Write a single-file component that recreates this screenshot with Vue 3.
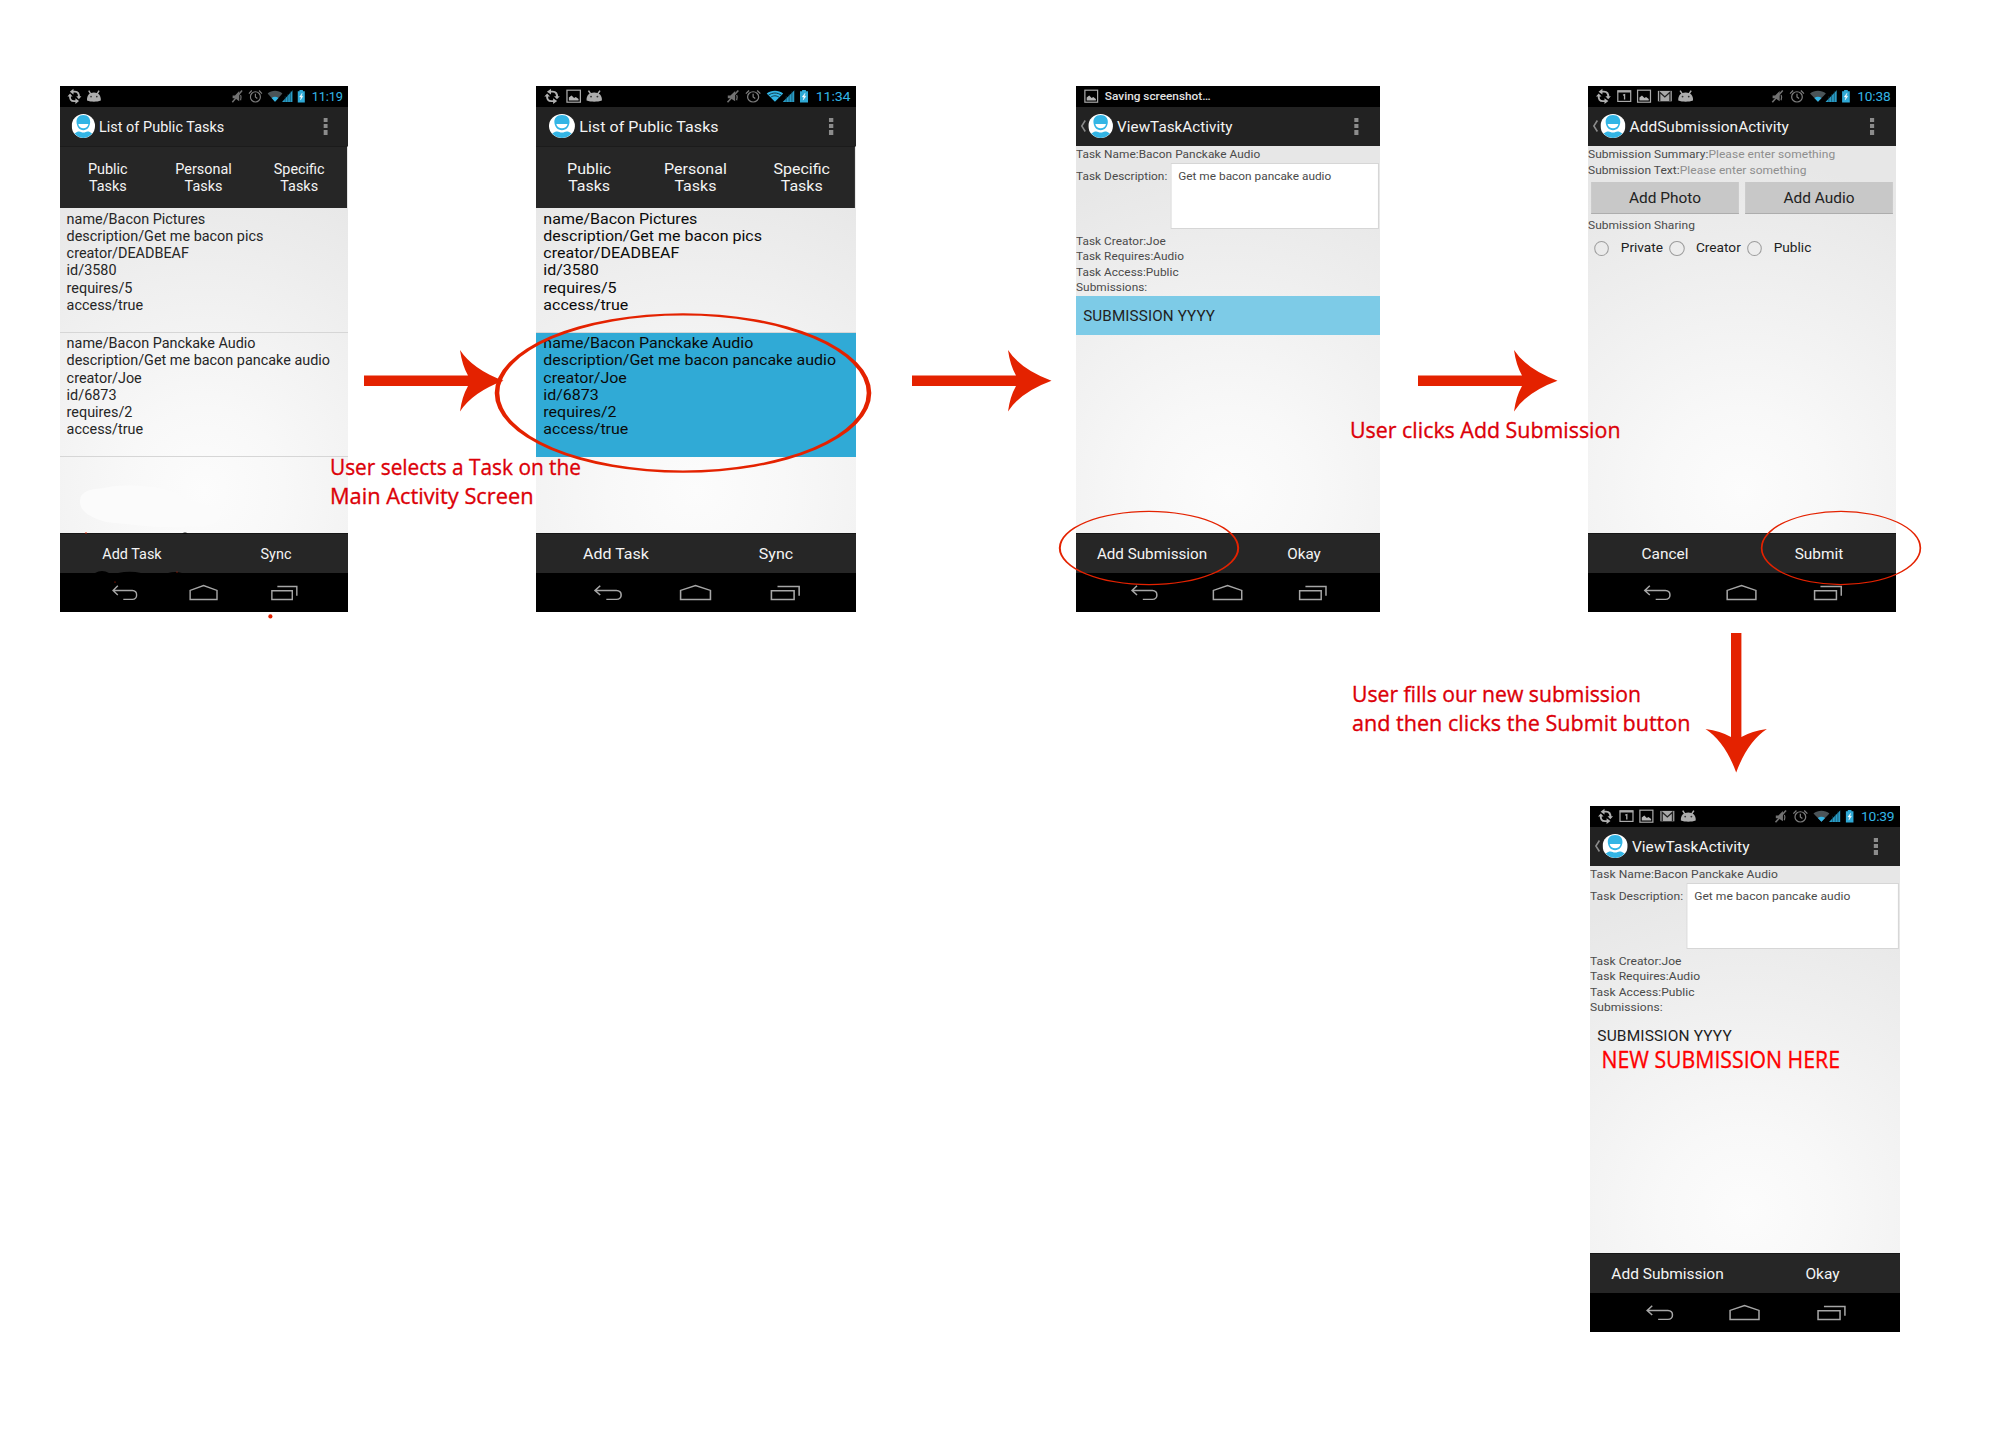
<script setup>
const BASE_WIDTH = 296
const bacon = ['name/Bacon Pictures', 'description/Get me bacon pics', 'creator/DEADBEAF', 'id/3580', 'requires/5', 'access/true']
const pancake = ['name/Bacon Panckake Audio', 'description/Get me bacon pancake audio', 'creator/Joe', 'id/6873', 'requires/2', 'access/true']

const phones = [
  { id: 'p1', x: 60, y: 86, w: 288, kind: 'list', title: 'List of Public Tasks', time: '11:19', left: ['sync', 'droid'], weak: true, actions: ['Add Task', 'Sync'] },
  { id: 'p2', x: 536, y: 86, w: 320, kind: 'list', title: 'List of Public Tasks', time: '11:34', left: ['sync', 'pic', 'droid'], weak: false, selected: true, actions: ['Add Task', 'Sync'] },
  { id: 'p3', x: 1076, y: 86, w: 304, kind: 'view', title: 'ViewTaskActivity', ticker: 'Saving screenshot…', left: ['pic'], back: true, selected: true, actions: ['Add Submission', 'Okay'] },
  { id: 'p4', x: 1588, y: 86, w: 308, kind: 'add', title: 'AddSubmissionActivity', time: '10:38', left: ['sync', 'cal', 'pic', 'mail', 'droid'], weak: true, back: true, actions: ['Cancel', 'Submit'] },
  { id: 'p5', x: 1590, y: 806, w: 310, kind: 'view', title: 'ViewTaskActivity', time: '10:39', left: ['sync', 'cal', 'pic', 'mail', 'droid'], weak: true, back: true, actions: ['Add Submission', 'Okay'] },
]

const frame = (p) => ({ left: p.x + 'px', top: p.y + 'px', width: p.w + 'px' })
const stretch = (p) => ({ transform: `scaleX(${p.w / BASE_WIDTH})` })

const arrow = 'M0 -5.2 H104 Q98 -15.7 96 -30.7 Q108.7 -11.3 139.5 0 Q108.7 11.3 96 30.7 Q98 15.7 104 5.2 H0 Z'
const arrows = ['translate(364 380.7)', 'translate(912 380.7)', 'translate(1418 380.7)', 'translate(1736.2 633) rotate(90)']

const notes = [
  { x: 330, y: 474.7, w: 251, t: 'User selects a Task on the' },
  { x: 330, y: 503.7, w: 203.5, t: 'Main Activity Screen' },
  { x: 1350, y: 437.7, w: 270.5, t: 'User clicks Add Submission' },
  { x: 1352, y: 701.7, w: 289, t: 'User fills our new submission' },
  { x: 1352, y: 730.7, w: 338.5, t: 'and then clicks the Submit button' },
]

const rings = [
  { cx: 683, cy: 393, rx: 188.3, ry: 79.8, tx: 4.6, ty: 2.4 },
  { cx: 1149, cy: 548, rx: 90.2, ry: 37.2, tx: 2, ty: 1.2 },
  { cx: 1841, cy: 548, rx: 80.2, ry: 37.2, tx: 1.7, ty: 1.2 },
]
const oval = (cx, cy, rx, ry) => `M${cx - rx} ${cy} a${rx} ${ry} 0 1 0 ${2 * rx} 0 a${rx} ${ry} 0 1 0 ${-2 * rx} 0 Z`
const ring = (r) => oval(r.cx, r.cy, r.rx, r.ry) + oval(r.cx, r.cy, r.rx - r.tx, r.ry - r.ty)
</script>

<template>
  <main class="board">
    <section v-for="p in phones" :key="p.id" class="frame" :style="frame(p)">
      <div class="phone" :style="stretch(p)">
        <div class="status">
          <div class="status-left">
            <svg v-for="i in p.left" :key="i" class="slot" viewBox="0 0 20 20">
              <g v-if="i === 'sync'" fill="none" stroke="#b0b0b0" stroke-width="1.9">
                <path d="M8.2 5.6 H10.5 C13.6 5.6 15 7.6 14.6 11.4" />
                <path d="M11.8 15.2 H9.5 C6.4 15.2 5 13.2 5.4 9.4" />
                <path d="M9 2.6 L5.2 5.6 L9 8.6 Z M11 12.2 L14.8 15.2 L11 18.2 Z M11.9 10.2 H17.3 L14.6 13.4 Z M2.7 10.6 H8.1 L5.4 7.4 Z" fill="#b0b0b0" stroke="none" />
              </g>
              <g v-else-if="i === 'droid'" fill="#adadad">
                <path d="M2.8 14.6 C2.4 9.4 5.4 6.4 10 6.4 C14.6 6.4 17.6 9.4 17.2 14.6 C13 16.2 7 16.2 2.8 14.6 Z" />
                <path d="M4.6 4.6 L6.8 8 M15.4 4.6 L13.2 8" stroke="#adadad" stroke-width="1.5" />
                <circle cx="7" cy="10.6" r=".9" fill="#333" /><circle cx="13" cy="10.6" r=".9" fill="#333" />
              </g>
              <g v-else-if="i === 'pic'">
                <rect x="3.7" y="4.1" width="12.6" height="12.2" fill="none" stroke="#a9a9a9" stroke-width="1.2" />
                <path d="M5.5 14.6 V11.5 L8 9.4 L10.4 12 L12 11 L14.6 13 V14.6 Z" fill="#b5b5b5" />
              </g>
              <g v-else-if="i === 'cal'">
                <rect x="3.7" y="4.7" width="12.6" height="10.8" fill="none" stroke="#a9a9a9" stroke-width="1.2" />
                <path d="M3.5 5.4 H16.5" stroke="#a9a9a9" stroke-width="2.2" />
                <path d="M8.8 9.2 L10.3 8.6 V13.6" fill="none" stroke="#a9a9a9" stroke-width="1.3" />
              </g>
              <g v-else>
                <rect x="3.2" y="4.8" width="13.6" height="10.6" fill="#a9a9a9" />
                <path d="M5 15 V6.2 L10 11 L15 6.2 V15" fill="none" stroke="#222" stroke-width="1.3" />
              </g>
            </svg>
          </div>
          <span v-if="p.ticker" class="ticker">{{ p.ticker }}</span>
          <div v-else class="status-right">
            <svg class="slot" viewBox="0 0 20 20" fill="none" stroke="#727272">
              <path d="M5.5 9.4 H8 L12.4 5 V15.4 L8 12.4 H5.5 Z" fill="#727272" stroke="none" />
              <path d="M15.4 4.4 L5.2 16.4" stroke-width="1.5" /><path d="M13.8 9 C14.6 10.5 14.6 12.4 13.8 14.4" stroke-width="1.2" />
            </svg>
            <svg class="slot" viewBox="0 0 20 20" fill="none" stroke="#7c7c7c" stroke-width="1.2">
              <circle cx="10" cy="10.9" r="5.2" /><path d="M10 7.6 V11 L12 12.6 M3.2 7.6 L6.2 4.4 M16.8 7.6 L13.8 4.4" />
            </svg>
            <svg class="wifi" viewBox="0 0 17 20">
              <template v-if="p.weak">
                <path d="M.4 7.4 C5 3.6 12 3.6 16.6 7.4 L8.5 16.2 Z" fill="#4b5458" />
                <path d="M4.8 12 C7 10.4 10 10.4 12.2 12 L8.5 16.2 Z" fill="#33b5e5" />
              </template>
              <template v-else>
                <path d="M.4 7.4 C5 3.6 12 3.6 16.6 7.4 L8.5 16.2 Z" fill="#33b5e5" />
                <path d="M2 9.3 C6 6 11 6 15 9.3 M4 11.6 C7 9.2 10 9.2 13 11.6" fill="none" stroke="#0b2a36" stroke-width=".9" />
              </template>
            </svg>
            <svg class="signal" viewBox="0 0 12 20">
              <path d="M.2 16.2 L11.8 3.8 V16.2 Z" fill="#2a9cc6" />
              <path d="M3.6 10 V16 M6.4 8 V16 M9.1 5 V16" stroke="#0d3a4b" stroke-width=".6" />
            </svg>
            <svg class="battery" viewBox="0 0 8 20">
              <path d="M.2 5.2 H2.2 V3.9 H5.8 V5.2 H7.8 V16.6 H.2 Z" fill="#2fa9d6" />
              <path d="M5 7.2 L2.3 11 H4 L3.2 14.2 L5.8 10.2 H4.2 Z" fill="#fff" stroke="#fff" stroke-width=".4" />
            </svg>
            <span class="time">{{ p.time }}</span>
          </div>
        </div>

        <header class="bar">
          <svg class="chevron" viewBox="0 0 6 14"><path v-if="p.back" d="M5 1.5 L1.6 7 L5 12.5" fill="none" stroke="#8a8a8a" stroke-width="1.5" /></svg>
          <svg class="logo" viewBox="0 0 24 24">
            <circle cx="12" cy="12" r="12" fill="#fff" />
            <path d="M12 1 C17 1 19.2 4.4 19 8.2 C18.8 12.6 16 16.2 12 16.2 C8 16.2 5.2 12.6 5 8.2 C4.8 4.4 7 1 12 1 Z" fill="#33b5e5" />
            <path d="M6.8 10 H17.2 C16.6 13 14.4 14.2 12 14.2 C9.6 14.2 7.4 13 6.8 10 Z" fill="#fff" />
            <path d="M3 19.6 C5.5 17 8.5 17.2 9.6 18 C11 18.8 13 18.8 14.4 18 C15.5 17.2 18.5 17 21 19.6 C18.8 22.4 15.6 24 12 24 C8.4 24 5.2 22.4 3 19.6 Z" fill="#33b5e5" />
          </svg>
          <h1>{{ p.title }}</h1>
          <div class="dots"><i /><i /><i /></div>
        </header>

        <div class="content">
          <template v-if="p.kind === 'list'">
            <nav class="tabs">
              <div v-for="t in ['Public', 'Personal', 'Specific']" :key="t">{{ t }}<br>Tasks</div>
            </nav>
            <div class="item" :class="{ strong: p.selected }"><p v-for="l in bacon" :key="l">{{ l }}</p></div>
            <div class="item" :class="{ strong: p.selected, on: p.selected }"><p v-for="l in pancake" :key="l">{{ l }}</p></div>
          </template>

          <template v-else-if="p.kind === 'view'">
            <div class="fields">
              <p>Task Name:Bacon Panckake Audio</p>
              <div class="desc">
                <label>Task Description:</label>
                <div class="box">Get me bacon pancake audio</div>
              </div>
              <p>Task Creator:Joe</p>
              <p>Task Requires:Audio</p>
              <p>Task Access:Public</p>
              <p>Submissions:</p>
            </div>
            <div class="submission" :class="{ on: p.selected }">SUBMISSION YYYY</div>
          </template>

          <template v-else>
            <div class="fields">
              <p>Submission Summary:<em>Please enter something</em></p>
              <p>Submission Text:<em>Please enter something</em></p>
              <div class="buttons"><button>Add Photo</button><button>Add Audio</button></div>
              <p class="sharing">Submission Sharing</p>
              <div class="radios"><label v-for="r in ['Private', 'Creator', 'Public']" :key="r"><i />{{ r }}</label></div>
            </div>
          </template>
        </div>

        <footer class="actions"><div v-for="a in p.actions" :key="a">{{ a }}</div></footer>
        <div class="nav">
          <svg viewBox="0 0 28 18"><path d="M6.6 1.8 L1.6 6.6 L6.6 11.4 M1.8 6.6 H22 C28 6.6 28 15.8 22 15.8 H12.4" /></svg>
          <svg viewBox="0 0 32 18"><path d="M1.8 16 V6.6 L16 1.6 L30.2 6.6 V16 Z" /></svg>
          <svg viewBox="0 0 30 18"><path d="M1.8 7 H23.4 V16 H1.8 Z M7.6 2.6 H28.2 V12" /></svg>
        </div>
      </div>
    </section>

    <svg class="overlay" viewBox="0 0 2000 1440">
      <path d="M80 502 C80 490 92 489 105 488 C128 482 172 488 180 496 C190 503 222 506 221 514 C221 524 205 528 190 526 C165 530 130 524 106 522 C92 518 80 512 80 502 Z" fill="#fbfbfb" />
      <g fill="#000"><path d="M182 533.6 Q185 531.4 188 533.6 Z" /><path d="M95 573 Q102 569 109 573 Z M118 573 Q130 570.5 141 573 Z M168 573 Q175 571 182 573 Z" /></g>
      <g fill="#e42200">
        <circle cx="270.4" cy="616.4" r="2.1" />
        <circle cx="86" cy="533" r=".8" /><circle cx="177" cy="572" r=".6" /><circle cx="115" cy="582" r=".6" />
        <path v-for="a in arrows" :key="a" :d="arrow" :transform="a" />
        <path v-for="r in rings" :key="r.cx" :d="ring(r)" fill-rule="evenodd" />
      </g>
      <text v-for="n in notes" :key="n.t" class="note" :x="n.x" :y="n.y" :textLength="n.w" lengthAdjust="spacingAndGlyphs">{{ n.t }}</text>
      <text class="note bright" x="1601.5" y="1068" textLength="238.5" lengthAdjust="spacingAndGlyphs">NEW SUBMISSION HERE</text>
    </svg>
  </main>
</template>

<style>
html, body { margin: 0; background: #fff; }
</style>

<style scoped>
.board { position: relative; width: 2000px; height: 1440px; overflow: hidden; background: #fff; font-family: Roboto, sans-serif; }
.frame { position: absolute; height: 526px; }
.phone { display: flex; flex-direction: column; width: 296px; height: 526px; transform-origin: 0 0; overflow: hidden; background: #000; font-size: 14.8px; }
p, h1 { margin: 0; font-weight: 400; white-space: nowrap; }

.status { flex: 0 0 20.5px; display: flex; align-items: center; background: #000; }
.status-left { display: flex; padding-left: 5px; }
.slot { width: 19.7px; height: 20px; }
.ticker { margin-left: 3.4px; color: #e2e2e2; font-size: 11.5px; font-weight: 500; }
.status-right { display: flex; align-items: center; margin-left: auto; padding-right: 5.2px; }
.wifi { width: 16px; height: 20px; margin-left: 2px; }
.signal { width: 11.5px; height: 20px; margin-left: -1px; }
.battery { width: 7.8px; height: 20px; margin-left: 4.8px; }
.time { width: 32px; margin-left: 6.8px; padding-top: 1px; color: #33b5e5; font-size: 13.2px; letter-spacing: -0.2px; }

.bar { flex: 0 0 39.5px; display: flex; align-items: center; background: #222; color: #f4f4f4; }
.chevron { width: 6px; height: 14px; margin-left: 3.5px; }
.logo { width: 24px; height: 24px; margin: 0 4.3px 0 2.2px; }
.bar h1 { flex: 1; padding-top: 2px; font-size: 14.8px; letter-spacing: 0.05px; }
.dots { display: flex; flex-direction: column; gap: 2.1px; width: 4px; margin-right: 21px; }
.dots i { height: 4.2px; background: #8c8c8c; }

.content { flex: 1; min-height: 0; background: radial-gradient(circle 330px at 50% 345px, #fcfcfc 0, #f8f8f8 25%, #e7e7e7 100%); }
.tabs { display: flex; align-items: center; box-sizing: border-box; height: 62px; padding-top: 1.5px; border-top: 1px solid #1b1b1b; border-right: 1px solid #e8e8e8; background: #262626; color: #f4f4f4; line-height: 17.25px; text-align: center; }
.tabs div { flex: 1; }
.item { box-sizing: border-box; height: 124.5px; padding: 2.6px 6.8px; border-bottom: 1px solid #d6d6d6; color: #262626; line-height: 17.25px; }
.item.strong { color: #0a0a0a; }
.item.on { background: #30aad6; border-color: #30aad6; }

.fields { padding-top: 1px; color: #4a4a4a; font-size: 11.5px; line-height: 15.6px; letter-spacing: 0.05px; }
.desc { display: flex; height: 71px; }
.desc label { width: 91.5px; padding-top: 6.5px; }
.box { box-sizing: border-box; width: 203px; height: 66px; margin-top: 0.8px; padding: 4.7px 7px; border: 1px solid #d6d6d6; background: #fff; letter-spacing: 0.02px; }
.submission { display: flex; align-items: center; box-sizing: border-box; height: 39.5px; padding: 1px 0 0 7px; color: #222; letter-spacing: 0.13px; }
.submission.on { background: #7dcbe7; }

.fields em { font-style: normal; color: #8e8e8e; }
.buttons { display: flex; gap: 6.4px; padding: 3.4px 3.2px 0; }
.buttons button { flex: 1; height: 32.7px; padding: 1px 0 0; border: 0; border-bottom: 1px solid #adadad; background: #c8c8c8; color: #222; font: 14.8px Roboto, sans-serif; }
.sharing { padding-top: 3.5px; }
.radios { display: flex; gap: 5.8px; padding: 7px 0 0 5.7px; color: #222; font-size: 13.15px; line-height: 16px; letter-spacing: 0; }
.radios label { display: flex; align-items: center; }
.radios i { box-sizing: border-box; width: 14.8px; height: 15.4px; margin-right: 11px; border: 1px solid #9c9c9c; border-radius: 50%; }

.actions { flex: 0 0 39.5px; display: flex; align-items: center; box-sizing: border-box; padding-top: 1px; border-top: 1px solid #161616; background: #262626; color: #f4f4f4; text-align: center; }
.actions div { flex: 1; }
.nav { flex: 0 0 39.5px; display: flex; align-items: center; justify-content: center; gap: 52.6px; box-sizing: border-box; padding: 1px 0 0 2px; background: #000; }
.nav svg { height: 17.5px; fill: none; stroke: #a6a6a6; stroke-width: 1.5; }
.overlay { position: absolute; inset: 0; width: 2000px; height: 1440px; }
.note { fill: #dc0008; stroke: #dc0008; stroke-width: 0.35px; font: 22.6px "Open Sans", sans-serif; }
.bright { fill: #f00; stroke: #f00; font-size: 23.6px; }
</style>
